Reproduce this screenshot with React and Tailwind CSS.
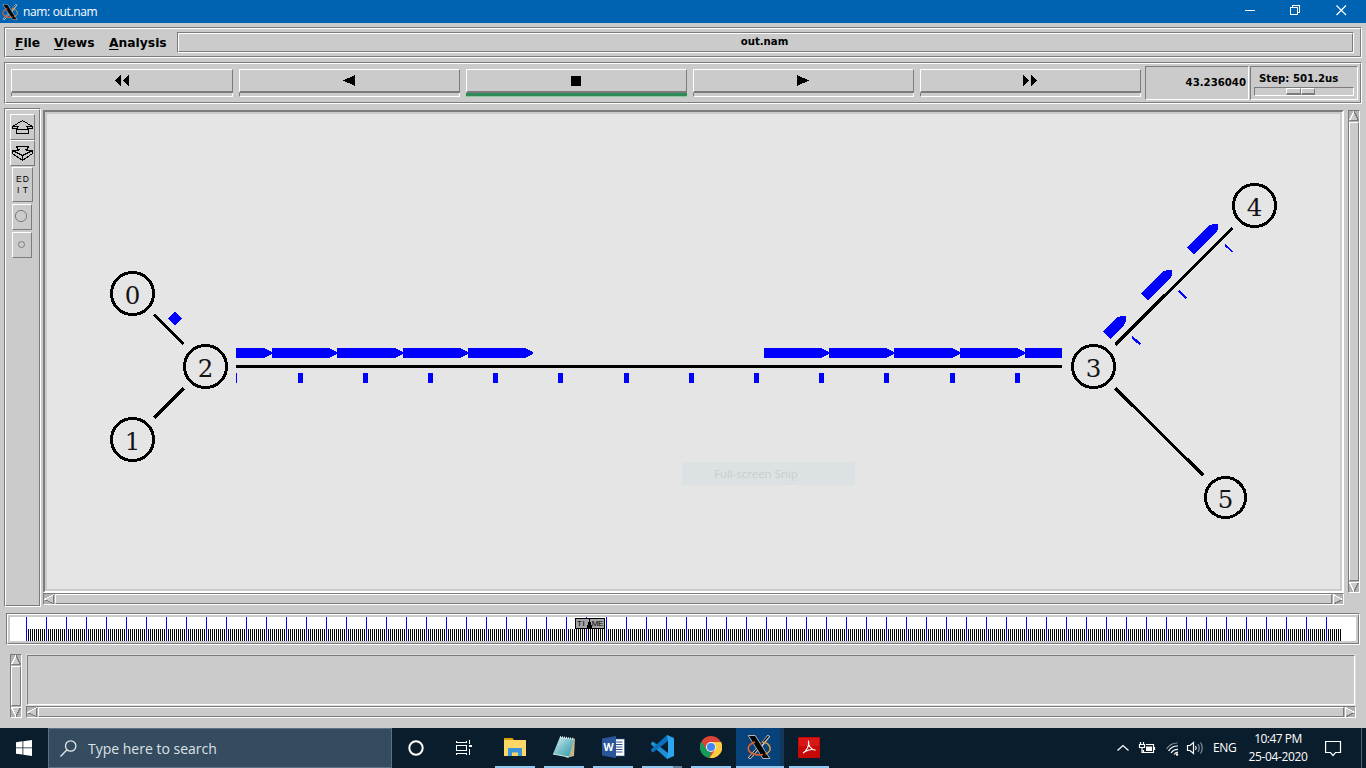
import React from 'react';

const SUNK = 'border border-t-[#7b7b7b] border-l-[#7b7b7b] border-b-white border-r-white';
const RAISED = 'border border-t-white border-l-white border-b-[#7b7b7b] border-r-[#7b7b7b]';
const CONDENSED = "font-['DejaVu_Sans_Condensed','DejaVu_Sans',sans-serif] [font-stretch:condensed] text-[11.3px] font-bold";

function Groove({ className = '', inner = '', children }) {
  return (
    <div className={`${SUNK} ${className}`}>
      <div className={`h-full w-full ${RAISED} ${inner}`}>{children}</div>
    </div>
  );
}

function XLogo({ className }) {
  return (
    <svg className={className} viewBox="0 0 24 24" fill="none">
      <path d="M22 0.5 L13.5 11.5 M10.5 14 L2 23.5" stroke="#d8d8d8" strokeWidth="3" />
      <path d="M21.5 1 L2.5 23" stroke="#0a0a0a" strokeWidth="1.3" />
      <path d="M1.2 0.5 H8.2 L22.8 23.5 H15.8 Z" fill="#050505" stroke="#d8d8d8" strokeWidth="0.8" />
      <path d="M8 7 C-1 10 -1 17 8 19.500 C11 20.300 14 20 16 19.500" stroke="#e2602c" strokeWidth="1.600" />
      <path d="M15 7 C24 8 26 16 18.500 19" stroke="#d99a45" strokeWidth="1.500" />
    </svg>
  );
}

const ARROWS = {
  left: ['M10 0.5 L0.5 5.5', 'M0.5 5.5 L10 10 M9.5 10 V0.5', '10,0.5 0.5,5.5 10,10'],
  right: ['M0.5 10 V0.5 L9.5 5.5', 'M9.5 5.5 L0.5 10', '0.5,0.5 9.5,5.5 0.5,10'],
  up: ['M5 0.5 L0.5 9.5', 'M5 0.5 L9.5 9.5 H0.5', '5,0.5 0.5,9.5 9.5,9.5'],
  down: ['M9.5 0.5 H0.5 L5 9.5', 'M9.5 0.5 L5 9.5', '0.5,0.5 9.5,0.5 5,9.5'],
};

function Arrow({ dir }) {
  const [light, dark, fill] = ARROWS[dir];
  return (
    <svg className="h-[10px] w-[10px] shrink-0" viewBox="0 0 10 10" fill="none" shapeRendering="crispEdges">
      <polygon points={fill} fill="#cbcbcb" />
      <path d={dark} stroke="#7b7b7b" />
      <path d={light} stroke="#fff" />
    </svg>
  );
}

function Scrollbar({ vertical, className = '' }) {
  return (
    <div className={`flex bg-[#b2b2b2] ${SUNK} ${vertical ? 'w-3 flex-col' : 'h-3'} ${className}`}>
      <Arrow dir={vertical ? 'up' : 'left'} />
      <div className={`flex-1 bg-[#cbcbcb] ${RAISED} ${vertical ? 'my-px' : 'mx-px'}`} />
      <Arrow dir={vertical ? 'down' : 'right'} />
    </div>
  );
}

function TitleBar() {
  return (
    <div className="flex h-[23px] items-center bg-[#0063b1] pl-0.5 text-white">
      <XLogo className="h-4 w-4" />
      <span className="ml-[5px] flex-1 pt-px font-['Open_Sans','Noto_Sans',sans-serif] text-[12px] leading-none tracking-[-0.35px]">nam: out.nam</span>
      <svg className="h-[23px] w-[126px]" viewBox="1240 0 126 23" fill="none" stroke="#fff" shapeRendering="crispEdges">
        <path d="M1245 10.5 H1255" />
        <path d="M1290.5 7.5 h7 v7 h-7 z M1292.5 7 v-1.5 h7 v7 h-2" />
        <path d="M1336.5 5.5 l9.5 9.5 M1346 5.5 l-9.5 9.5" shapeRendering="auto" strokeWidth="1.2" />
      </svg>
    </div>
  );
}

function MenuBar() {
  return (
    <Groove className="mx-1 mt-1 h-[31px] w-[1358px]" inner="flex items-center pl-[9px] pr-[6px] font-['DejaVu_Sans',sans-serif] text-[12.3px] font-bold">
      {['File', 'Views', 'Analysis'].map((m, i) => (
        <span key={m} className={['w-[39px] pt-0.5 leading-none', 'w-[55px] pt-0.5 leading-none', 'w-[68px] pt-0.5 leading-none'][i]}>
          <u className="underline-offset-2">{m[0]}</u>{m.slice(1)}
        </span>
      ))}
      <Groove className="h-[21px] flex-1" inner={`flex items-center justify-center pr-0.5 ${CONDENSED}`}>out.nam</Groove>
    </Groove>
  );
}

const CONTROLS = [
  ['w-[222px]', 'M7 0 V11 L1 5.5 Z M15 0 V11 L9 5.5 Z', 16],
  ['w-[221px]', 'M12 0 V11 L0 5.5 Z', 13],
  ['w-[221px]', 'M0 1 H10 V11 H0 Z', 11],
  ['w-[221px]', 'M0 0 V11 L12 5.5 Z', 13],
  ['w-[221px]', 'M0 0 V11 L6.5 5.5 Z M8 0 V11 L14.5 5.5 Z', 15],
];

function Toolbar() {
  return (
    <Groove className="mx-1 mt-1 h-[42px] w-[1358px]" inner={`flex pl-[5px] ${CONDENSED}`}>
      <div className="flex gap-[6px] pt-[5px]">
        {CONTROLS.map(([w, d, size], i) => (
          <div key={i} className={`${w} h-7 shrink-0`}>
            <div className="flex h-6 items-center justify-center border border-b-2 border-t-white border-l-white border-b-[#7b7b7b] border-r-[#7b7b7b]">
              <svg width={size} height="11" viewBox={`0 0 ${size} 11`} shapeRendering="crispEdges"><path d={d} /></svg>
            </div>
            <div className={i === 2 ? 'h-1 border-b border-[#8cc5a4] bg-[#2e8b57]' : 'h-1 border border-t-0 border-l-[#7b7b7b] border-r-white border-b-white'} />
          </div>
        ))}
      </div>
      <div className={`ml-1 mt-0.5 flex h-[34px] w-[104px] items-center justify-end pr-0.5 ${SUNK}`}>43.236040</div>
      <div className={`ml-px mt-0.5 h-[34px] w-[108px] pl-[3px] ${SUNK}`}>
        <div className="pl-[5px] pt-[6px] leading-[11px]">Step: 501.2us</div>
        <div className={`mt-[3px] flex h-[9px] w-[100px] pl-[31px] ${SUNK}`}>
          <div className="h-[7px] w-[15px] border border-t-white border-l-white border-r-[#7b7b7b] border-b-2 border-b-[#7b7b7b]" />
          <div className="h-[7px] w-[14px] border border-t-white border-l-white border-r-[#7b7b7b] border-b-2 border-b-[#7b7b7b]" />
        </div>
      </div>
    </Groove>
  );
}

function SideTools() {
  return (
    <Groove className="h-[499px] w-[37px]" inner="flex flex-col items-start pl-1 pt-1">
      <div className={`h-[26px] w-[25px] ${RAISED}`}>
        <svg className="h-6 w-[23px]" viewBox="11 115 23 24" fill="none" stroke="#000" shapeRendering="crispEdges">
          <path d="M22.5 120.5 L12.5 126.5 V128.5 H16.5 V133.5 H28.5 V128.5 H32.5 V126.5 Z M12.5 126.5 H18.5 L16.5 129.5 H28.5 L26.5 126.5 H32.5" />
        </svg>
      </div>
      <div className={`h-[26px] w-[25px] ${RAISED}`}>
        <svg className="h-6 w-[23px]" viewBox="11 141 23 24" fill="none" stroke="#000" shapeRendering="crispEdges">
          <path d="M16.5 146.5 H28.5 L26.5 150.5 H32.5 V153.5 L22.5 160.5 L12.5 153.5 V150.5 H18.5 Z M12.5 150.5 L22.5 155.5 L32.5 150.5 M22.5 155.5 V160.5 M17 149.5 h3 M25 149.5 h3" />
        </svg>
      </div>
      <div className={`ml-0.5 mt-px flex h-[35px] w-[21px] flex-col items-center justify-center font-['Liberation_Sans',sans-serif] text-[8.5px] leading-[11px] ${RAISED}`}>
        <span className="flex w-[13px] justify-between"><b className="font-normal">E</b><b className="font-normal">D</b></span>
        <span className="flex w-[11px] justify-between"><b className="font-normal">I</b><b className="font-normal">T</b></span>
      </div>
      <div className={`ml-0.5 mt-0.5 h-[26px] w-5 ${RAISED}`}>
        <svg className="h-6 w-[18px]" viewBox="13 205 18 24" fill="none"><circle cx="21" cy="216" r="5.6" stroke="#7b7b7b" /></svg>
      </div>
      <div className={`ml-0.5 mt-0.5 h-[26px] w-5 ${RAISED}`}>
        <svg className="h-6 w-[18px]" viewBox="13 233 18 24" fill="none"><circle cx="21.5" cy="244.5" r="3" stroke="#7b7b7b" /></svg>
      </div>
    </Groove>
  );
}

const NODES = [
  [132.5, 293.5, 21], [132.5, 439.5, 21], [205.5, 366.5, 21],
  [1093.5, 366.5, 21], [1254.5, 205.5, 21], [1225.5, 497.5, 20],
];
const PACKETS = [[236, 272], [272, 337], [337, 403], [403, 468], [468, 533], [764, 829], [829, 894], [894, 960], [960, 1025]];
const ACKS = [298, 363, 428, 493, 558, 624, 689, 754, 819, 884, 950, 1015];

function Network() {
  return (
    <div className="h-[483px] w-[1301px] border-2 border-t-[#7b7b7b] border-l-[#7b7b7b] border-b-white border-r-white">
      <div className="relative h-full w-full border-2 border-[#cbcbcb] bg-[#e5e5e5]">
        <svg className="block h-[475px] w-[1293px]" viewBox="47 114 1293 475" shapeRendering="crispEdges">
          <g stroke="#000" strokeWidth="3.1">
            <path d="M154 314.5 L183.500 344 M183.500 388.500 L154 418 M236 366.5 H1062 M1115.500 344.500 L1232.500 228 M1115.500 388.500 L1203.500 475.500" />
          </g>
          <g fill="none" stroke="#000" strokeWidth="3">
            {NODES.map(([x, y, r], i) => <circle key={i} cx={x} cy={y} r={r} />)}
          </g>
          <g fontFamily="'DejaVu Serif', serif" fontSize="24.500" textAnchor="middle" fill="#141414">
            {NODES.map(([x, y], i) => <text key={i} x={x} y={y + 10}>{i}</text>)}
          </g>
          <g fill="#00f">
            {PACKETS.map(([a, b]) => <polygon key={a} points={`${a},348 ${b - 8},348 ${b},352 ${b},354 ${b - 8},358 ${a},358`} />)}
            <rect x="1025" y="348" width="37" height="10" />
            <rect x="236" y="373" width="1" height="10" />
            {ACKS.map((x) => <rect key={x} x={x} y="373" width="5" height="10" />)}
            <polygon points="175,311.5 182,318.5 175,325.5 168,318.5" />
            <polygon points="1187.3,247.500 1194,254 1216,232.500 1218,229 1218,224 1214,224 1210,225" />
            <polygon points="1141.3,293.500 1148,300 1170,278.500 1172,275 1172,270 1168,270 1164,271" />
            <polygon points="1103.3,331.700 1110.3,339 1124,325 1126,321 1126,316 1122,316 1117.500,317" />
          </g>
          <g stroke="#00f" strokeWidth="2.300">
            <path d="M1225 245 L1232.5 252" strokeWidth="1.700" />
            <path d="M1179 291 L1186.5 298.5 M1132 337 L1140.5 344.5" />
          </g>
        </svg>
        <div className="absolute left-[635px] top-[348px] h-[23px] w-[173px] bg-[#dce1e4] pl-8 font-['Open_Sans','Noto_Sans',sans-serif] text-[11.500px] leading-[23px] tracking-[-0.050px] text-[#cbcdcf]">Full-screen Snip</div>
      </div>
    </div>
  );
}

const range = (from, to, step) => Array.from({ length: Math.floor((to - from) / step) + 1 }, (_, i) => from + i * step);

function Timeline() {
  return (
    <Groove className="ml-[6px] mt-[6px] h-8 w-[1354px]" inner="p-0.5">
      <div className="relative h-6 w-[1346px] bg-white">
        <svg className="block h-6 w-[1346px]" viewBox="10 617 1346 24" shapeRendering="crispEdges">
          <path d={range(28, 1340, 2).map((x) => `M${x + 0.5} 629 V641`).join(' ')} stroke="#000" />
          <path d={range(26, 1326, 20).map((x) => `M${x + 0.5} 617 V641`).join(' ')} stroke="#00f" />
        </svg>
        <div className="absolute left-[565px] top-px flex h-[11px] w-[30px] justify-between border border-black bg-[#a3a3a3] px-px font-['Liberation_Sans',sans-serif] text-[8px] leading-[9px] text-black">
          <span className="tracking-[0.6px]">TI</span>
          <span className="tracking-[-0.4px]">ME</span>
          <svg className="absolute left-[11px] top-0 h-[9px] w-[5px]" viewBox="0 0 5 9" shapeRendering="crispEdges"><path d="M2 0 H3 V3 H4 V6 H5 V9 H0 V6 H1 V3 H2 Z" /></svg>
        </div>
      </div>
    </Groove>
  );
}

function Annotations() {
  return (
    <div className="mt-[9px] flex h-16 gap-1 pl-[10px]">
      <Scrollbar vertical className="h-16" />
      <div className="flex w-[1330px] flex-col">
        <div className="h-[52px] border border-[#dcdcdc]">
          <div className={`h-full ${SUNK}`} />
        </div>
        <Scrollbar />
      </div>
    </div>
  );
}

const APPS = [
  <svg key="e" className="h-[22px] w-[22px]" viewBox="0 0 22 22"><path d="M0 2 h8.5 l1.5 2 h-10z" fill="#e0a100" /><path d="M0 4 H22 V20 H0Z" fill="#ffd767" /><path d="M4 12 H18 V20 H14 V16.5 H8 V20 H4Z" fill="#3b95dc" /><path d="M8 17 h6 v3 h-6z" fill="#fbd35c" /></svg>,
  <svg key="n" className="h-[22px] w-[24px]" viewBox="0 0 24 22"><defs><linearGradient id="pad" x1="0" y1="0" x2="1" y2="1"><stop offset="0" stopColor="#e7f6f7" /><stop offset=".5" stopColor="#78bfca" /><stop offset="1" stopColor="#3296a8" /></linearGradient></defs><path d="M21 2 L23 3 L22 20 L14 22 Z" fill="#c4b489" /><path d="M8 1 L22 3 L17 21 L1 18 Z" fill="url(#pad)" /><path d="M8 1 L22 3" stroke="#e8ecec" strokeWidth="2" strokeDasharray="1 1" /><path d="M1 18 L17 21" stroke="#cfe8e8" /></svg>,
  <svg key="w" className="h-[22px] w-[23px]" viewBox="0 0 23 22"><path d="M12 3 H22.5 V20 H12Z" fill="#fff" stroke="#2b579a" strokeWidth=".6" /><path d="M14 6h6.5M14 8.5h6.5M14 11h6.5M14 13.500h6.500M14 16h6.500" stroke="#2b579a" /><path d="M0 2.500 L14 0 V22 L0 19.500Z" fill="#2b579a" /><text x="6.700" y="15" textAnchor="middle" fontFamily="Open Sans, sans-serif" fontWeight="700" fontSize="10.500" fill="#fff">W</text></svg>,
  <svg key="v" className="h-6 w-6" viewBox="0 0 24 24"><path d="M1 8 L3 6.500 L18 18 V24 L16.500 23.500 L1 9.500Z" fill="#1f8fd8" /><path d="M1 16 L3 17.500 L18 6 V0 L16.500 .5 L1 14.500Z" fill="#0a71bd" /><path d="M17 0 L24 3 V21 L17 24 L18 18 V6Z" fill="#2ba5ef" /></svg>,
  <svg key="c" className="h-[22px] w-[22px]" viewBox="0 0 22 22"><circle cx="11" cy="11" r="11" fill="#db4437" /><path d="M1.500 5.500 L6.700 14 L11 16 L9.500 22 A11 11 0 0 1 1.500 5.500Z" fill="#0f9d58" /><path d="M11 6 H21 A11 11 0 0 1 9.500 22 L15.300 13.500Z" fill="#ffcd40" /><circle cx="11" cy="11" r="5.100" fill="#f1f1f1" /><circle cx="11" cy="11" r="4" fill="#4285f4" /></svg>,
  <XLogo key="x" className="h-6 w-6" />,
  <svg key="a" className="h-[21px] w-[22px]" viewBox="0 0 22 21"><rect width="22" height="21" rx="1" fill="#c80707" /><rect x="1" y="1" width="20" height="8" fill="#d81717" /><path d="M5 16 C8 14.500 12 8 10.500 4.500 C9.500 7.500 13 13 17.500 13.200 C14 11.500 8 13.500 5 16Z" fill="none" stroke="#fff" strokeWidth="1.100" /></svg>,
];

function Taskbar() {
  return (
    <div className="mt-[10px] flex h-10 items-stretch bg-[#0a1d2d] font-['Open_Sans','Noto_Sans',sans-serif] text-white">
      <div className="flex w-12 items-center justify-center">
        <svg className="h-4 w-4" viewBox="0 0 16 16" fill="#fff"><path d="M0 2.200 L6.500 1.300 V7.500 H0Z M7.300 1.200 L16 0 V7.500 H7.300Z M0 8.300 H6.500 V14.600 L0 13.700Z M7.300 8.300 H16 V16 L7.300 14.800Z" /></svg>
      </div>
      <div className="flex w-[344px] items-center border border-[#5d7182] bg-[#354b5f] pl-[11px]">
        <svg className="h-[17px] w-[17px]" viewBox="0 0 17 17" fill="none" stroke="#e5e9ec" strokeWidth="1.300"><circle cx="10.700" cy="6" r="5.200" /><path d="M7 9.800 L0.500 16.500" /></svg>
        <span className="ml-[11px] text-[14px] text-[#dde2e6]">Type here to search</span>
      </div>
      <div className="flex w-12 items-center justify-center">
        <svg className="h-4 w-4" viewBox="0 0 16 16"><circle cx="8" cy="8" r="6.700" fill="none" stroke="#fff" strokeWidth="2" /></svg>
      </div>
      <div className="flex w-12 items-center justify-center">
        <svg className="h-4 w-4" viewBox="0 0 16 16" fill="none" stroke="#fff" shapeRendering="crispEdges"><path d="M0.500 0.500 V2.500 H10.500 V0.500 M0.500 5.500 H10.500 V10.500 H0.500Z M0.500 15 V13.500 H10.500 V15 M13.500 0 V4 M13.500 9 V15" /><path d="M12.500 5 h3 v2 h-3z" fill="#fff" stroke="none" /></svg>
      </div>
      <div className="ml-[3px] flex gap-px">
        {APPS.map((icon, i) => (
          <div key={i} className={`flex w-12 flex-col items-center ${i === 5 ? 'border-r-4 border-[#12385b] bg-[#08427a]' : ''}`}>
            <div className={`flex h-[38px] flex-1 items-center justify-center ${i === 5 ? 'pl-0.5' : ''}`}>{icon}</div>
            {i === 3 ? (
              <div className="flex h-0.5 w-10">
                <div className="w-[31px] bg-[#91c8f2]" />
                <div className="w-[9px] bg-[#66859f]" />
              </div>
            ) : (
              <div className={i === 5 ? 'h-0.5 w-12 translate-x-0.5 bg-[#91c8f2]' : 'h-0.5 w-10 bg-[#91c8f2]'} />
            )}
          </div>
        ))}
      </div>
      <div className="ml-auto flex w-[253px] items-center">
        <svg className="h-10 w-[100px] shrink-0" viewBox="1113 728 100 40" fill="none" stroke="#fff" strokeWidth="1.200">
          <path d="M1117.500 750.500 L1123 745.500 L1128.500 750.500" />
          <path d="M1146 744.500 H1153.500 V752.500 H1143.500 V750 M1154.500 747 V750 M1140.500 742 V744 M1143.500 742 V744 M1139.500 744.500 H1144.500 V747.500 H1139.500Z M1142 748 V752.500 H1144" />
          <path d="M1146 746.500 H1152 V751 H1146Z" fill="#fff" stroke="none" />
          <g stroke="#8794a0"><path d="M1166.500 749 A13 13 0 0 1 1177.500 743" /></g>
          <path d="M1168.500 751 A10.500 10.500 0 0 1 1178 746 M1171 753 A8 8 0 0 1 1178 749.300 M1174 754.500 A5 5 0 0 1 1178 752.200" />
          <circle cx="1177" cy="754.500" r="1.200" fill="#fff" stroke="none" />
          <path d="M1187.500 745.500 H1190 L1193.500 742.500 V753.500 L1190 750.500 H1187.500Z M1195.500 746 Q1197 748 1195.500 750" />
          <path d="M1198 744 Q1200.500 748 1198 752 M1200.500 742.500 Q1204 748 1200.500 753.500" stroke="#84919e" />
        </svg>
        <span className="w-[28px] text-[12px] tracking-[-0.300px]">ENG</span>
        <div className="w-[74px] text-center text-[12px] leading-[18px] tracking-[-0.500px]">
          <div>10:47 PM</div>
          <div className="tracking-[-0.350px]">25-04-2020</div>
        </div>
        <svg className="ml-[10px] h-[17px] w-[17px]" viewBox="0 0 17 17" fill="none" stroke="#fff" strokeWidth="1.200"><path d="M0.600 1.500 H15.500 V12.500 H10.500 L8 15.500 L5.500 12.500 H0.600Z" /></svg>
        <div className="ml-auto mr-1 h-10 w-px bg-[#53616d]" />
      </div>
    </div>
  );
}

export default function App() {
  return (
    <div className="flex h-[768px] w-[1366px] flex-col overflow-hidden bg-[#cbcbcb] text-black">
      <TitleBar />
      <MenuBar />
      <Toolbar />
      <div className="mt-1 flex h-[499px] pl-1">
        <SideTools />
        <div className="ml-0.5 mt-0.5">
          <Network />
          <Scrollbar />
        </div>
        <Scrollbar vertical className="ml-1 mt-0.5 h-[483px]" />
      </div>
      <Timeline />
      <Annotations />
      <Taskbar />
    </div>
  );
}
